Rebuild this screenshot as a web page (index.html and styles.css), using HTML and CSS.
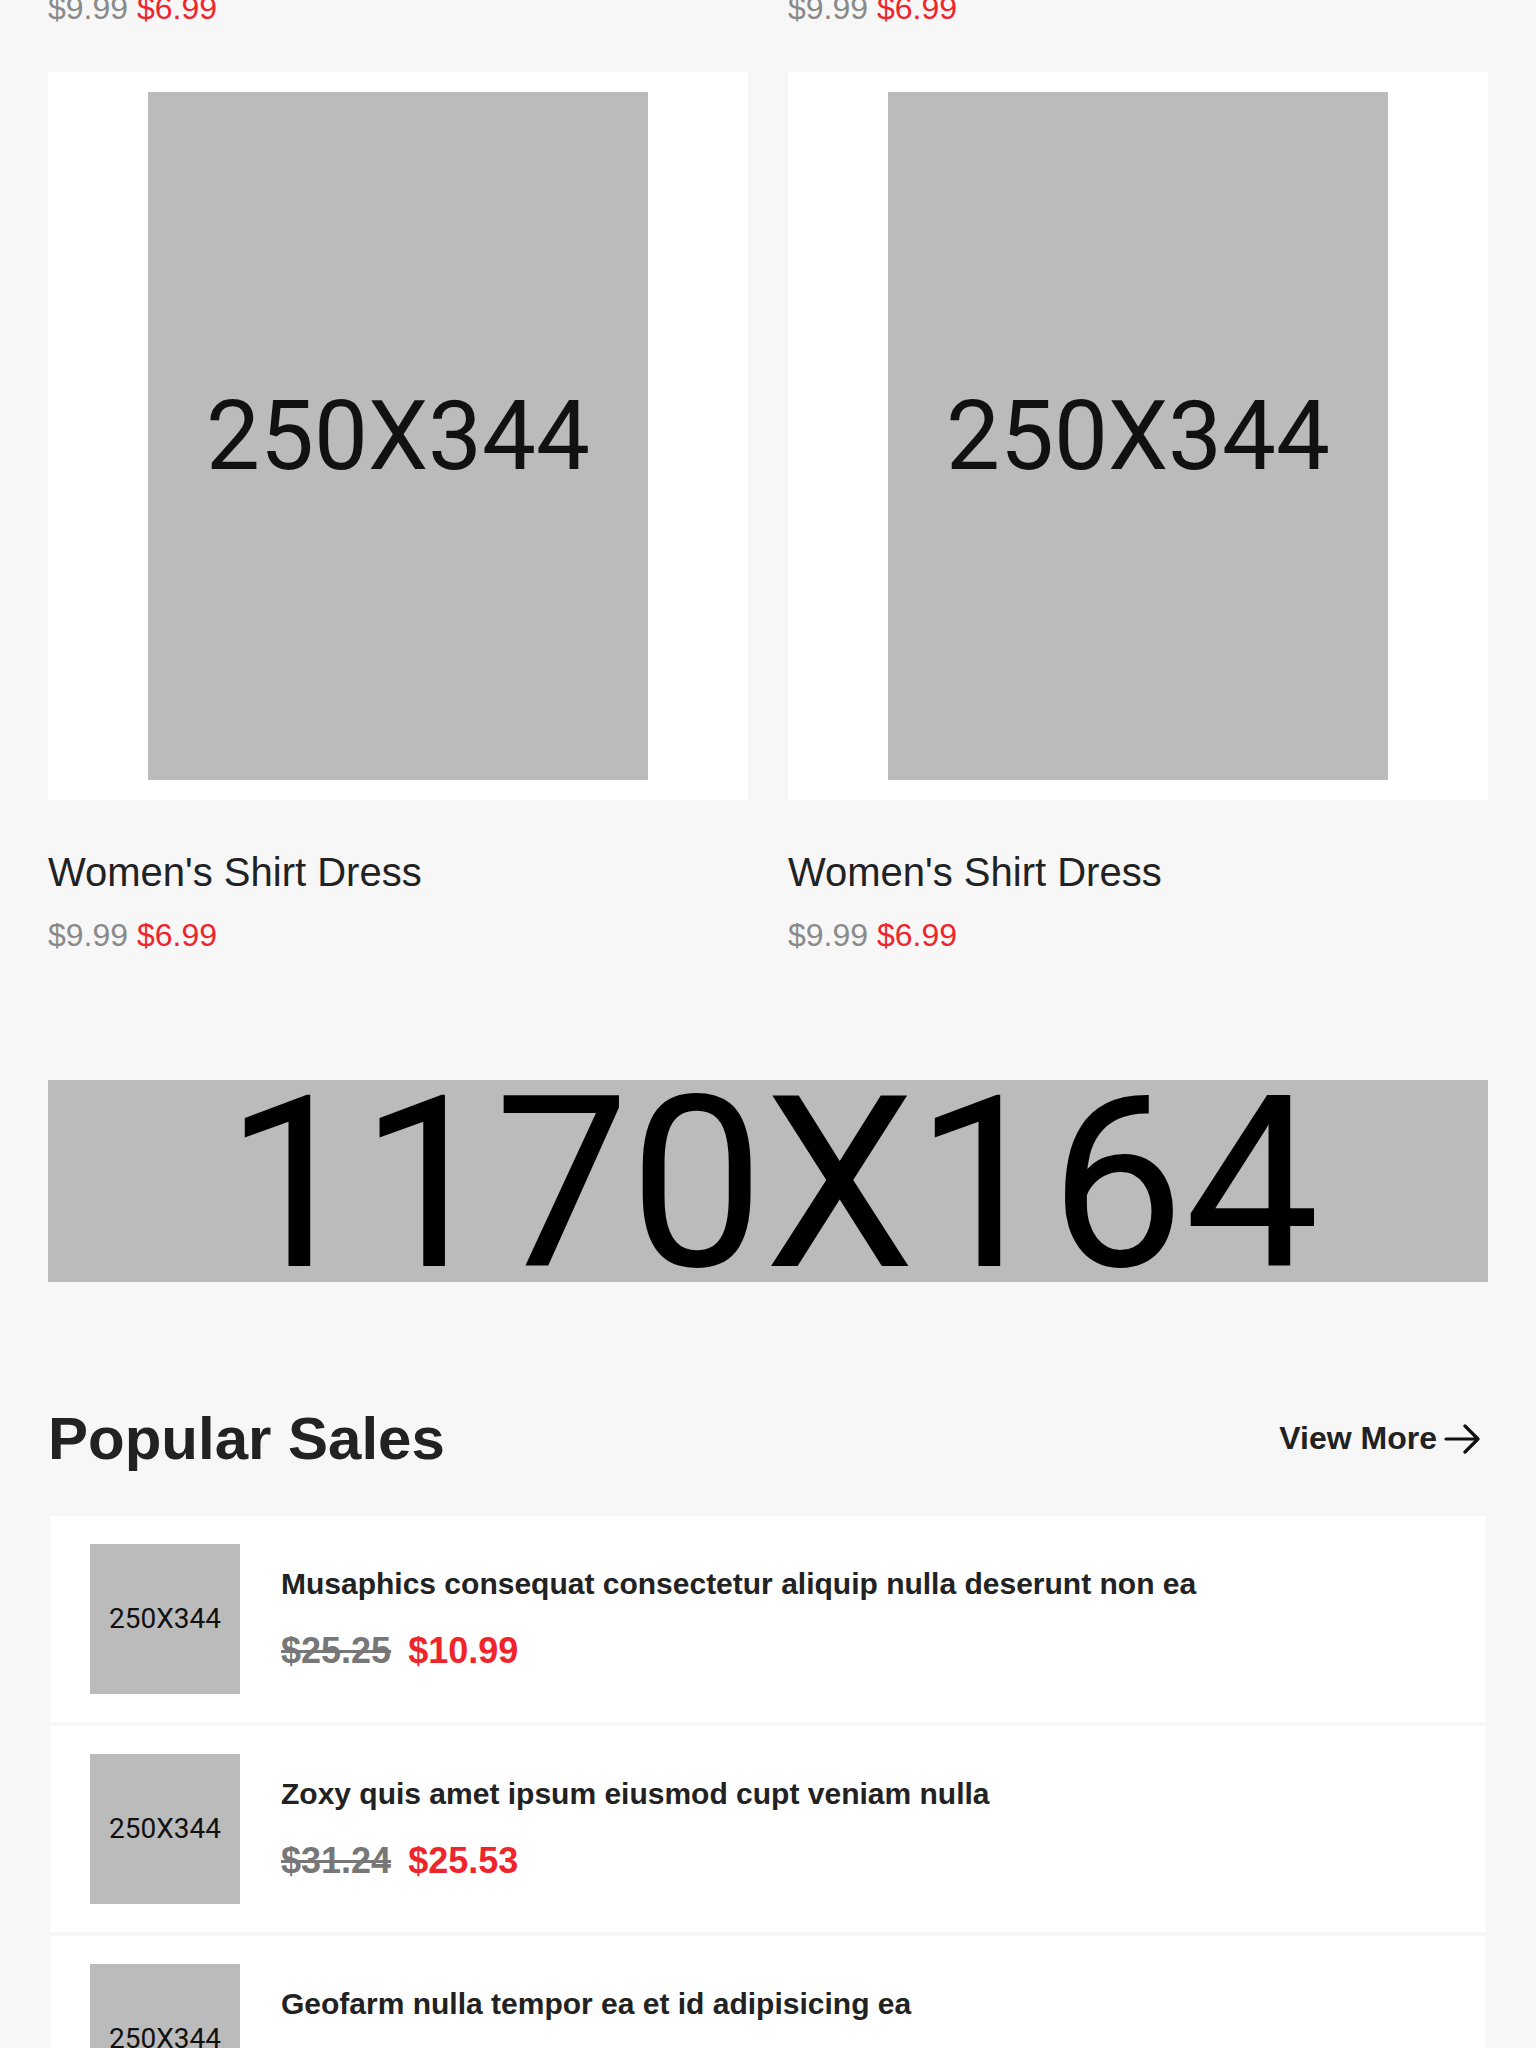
FILE: index.html
```html
<!DOCTYPE html>
<html lang="en">
<head>
<meta charset="utf-8">
<title>Shop</title>
<link rel="stylesheet" href="styles.css">
</head>
<body>
<main class="page">
  <section class="product-grid">
    <article class="product">
      <div class="product-card"><div class="ph ph-card">250X344</div></div>
      <h3 class="product-name">Women's Shirt Dress</h3>
      <div class="product-price"><span class="old">$9.99</span> <span class="new">$6.99</span></div>
    </article>
    <article class="product">
      <div class="product-card"><div class="ph ph-card">250X344</div></div>
      <h3 class="product-name">Women's Shirt Dress</h3>
      <div class="product-price"><span class="old">$9.99</span> <span class="new">$6.99</span></div>
    </article>
    <article class="product">
      <div class="product-card"><div class="ph ph-card">250X344</div></div>
      <h3 class="product-name">Women's Shirt Dress</h3>
      <div class="product-price"><span class="old">$9.99</span> <span class="new">$6.99</span></div>
    </article>
    <article class="product">
      <div class="product-card"><div class="ph ph-card">250X344</div></div>
      <h3 class="product-name">Women's Shirt Dress</h3>
      <div class="product-price"><span class="old">$9.99</span> <span class="new">$6.99</span></div>
    </article>
  </section>

  <div class="ph banner"><span class="banner-text">1170X164</span></div>

  <section class="popular">
    <div class="section-head">
      <h2 class="section-title">Popular Sales</h2>
      <a class="view-more" href="#">View More
        <svg class="arrow" width="36" height="36" viewBox="0 0 36 36" aria-hidden="true">
          <path d="M2 18H34M21 5L34 18L21 31" fill="none" stroke="#111" stroke-width="3.2" stroke-linecap="round" stroke-linejoin="round"/>
        </svg>
      </a>
    </div>
    <div class="sales-list">
      <div class="sale-item">
        <div class="ph thumb">250X344</div>
        <div class="sale-info">
          <h4 class="sale-title">Musaphics consequat consectetur aliquip nulla deserunt non ea</h4>
          <div class="sale-price"><span class="sale-old">$25.25</span> <span class="sale-new">$10.99</span></div>
        </div>
      </div>
      <div class="sale-item">
        <div class="ph thumb">250X344</div>
        <div class="sale-info">
          <h4 class="sale-title">Zoxy quis amet ipsum eiusmod cupt veniam nulla</h4>
          <div class="sale-price"><span class="sale-old">$31.24</span> <span class="sale-new">$25.53</span></div>
        </div>
      </div>
      <div class="sale-item">
        <div class="ph thumb">250X344</div>
        <div class="sale-info">
          <h4 class="sale-title">Geofarm nulla tempor ea et id adipisicing ea</h4>
          <div class="sale-price"><span class="sale-old">$42.10</span> <span class="sale-new">$36.99</span></div>
        </div>
      </div>
    </div>
  </section>
</main>
</body>
</html>
```

FILE: styles.css
```css
* { box-sizing: border-box; }

body {
  margin: 0;
  background: #f7f7f7;
  font-family: "Liberation Sans", Arial, sans-serif;
  color: #222;
}

.page {
  padding: 0 48px 60px;
  margin-top: -855px;
}

.product-grid {
  display: grid;
  grid-template-columns: 1fr 1fr;
  column-gap: 40px;
  row-gap: 46px;
}

.product-card {
  background: #fff;
  padding: 20px 0;
  display: flex;
  justify-content: center;
}

.ph {
  background: #bbbbbb;
  display: flex;
  align-items: center;
  justify-content: center;
  font-family: Roboto, "Liberation Sans", sans-serif;
  color: #111;
  line-height: 1;
}

.ph-card {
  width: 500px;
  height: 688px;
  font-size: 96px;
}

.product-name {
  margin: 49px 0 0;
  font-size: 40px;
  line-height: 46px;
  font-weight: 400;
  color: #222;
}

.product-price {
  margin-top: 22px;
  font-size: 32px;
  line-height: 36px;
}

.old { color: #8a8a8a; }
.new { color: #f0242b; }

.banner {
  margin-top: 127px;
  height: 202px;
  font-size: 240px;
  color: #000;
  padding: 6px 0 0 8px;
  overflow: hidden;
}

.section-head {
  margin-top: 122px;
  display: flex;
  justify-content: space-between;
  align-items: center;
}

.section-title {
  margin: 0;
  font-size: 60px;
  line-height: 69px;
  font-weight: 700;
  color: #222;
}

.view-more {
  display: flex;
  align-items: center;
  gap: 7px;
  margin-right: 8px;
  font-size: 32px;
  line-height: 37px;
  font-weight: 700;
  color: #222;
  text-decoration: none;
}

.arrow { display: block; }

.sales-list {
  margin-top: 43px;
  padding: 0 2px;
  display: flex;
  flex-direction: column;
  gap: 4px;
}

.sale-item {
  background: #fff;
  padding: 28px 40px;
  display: flex;
  align-items: center;
}

.thumb {
  flex: none;
  width: 150px;
  height: 150px;
  font-size: 28px;
  margin-right: 41px;
}

.sale-title {
  margin: 0;
  font-size: 30px;
  line-height: 34px;
  font-weight: 700;
  color: #222;
}

.sale-price {
  margin-top: 29px;
  font-size: 36px;
  line-height: 41px;
  font-weight: 700;
}

.sale-old {
  color: #777;
  text-decoration: line-through;
  margin-right: 7px;
}

.sale-new { color: #f0242b; }
```
